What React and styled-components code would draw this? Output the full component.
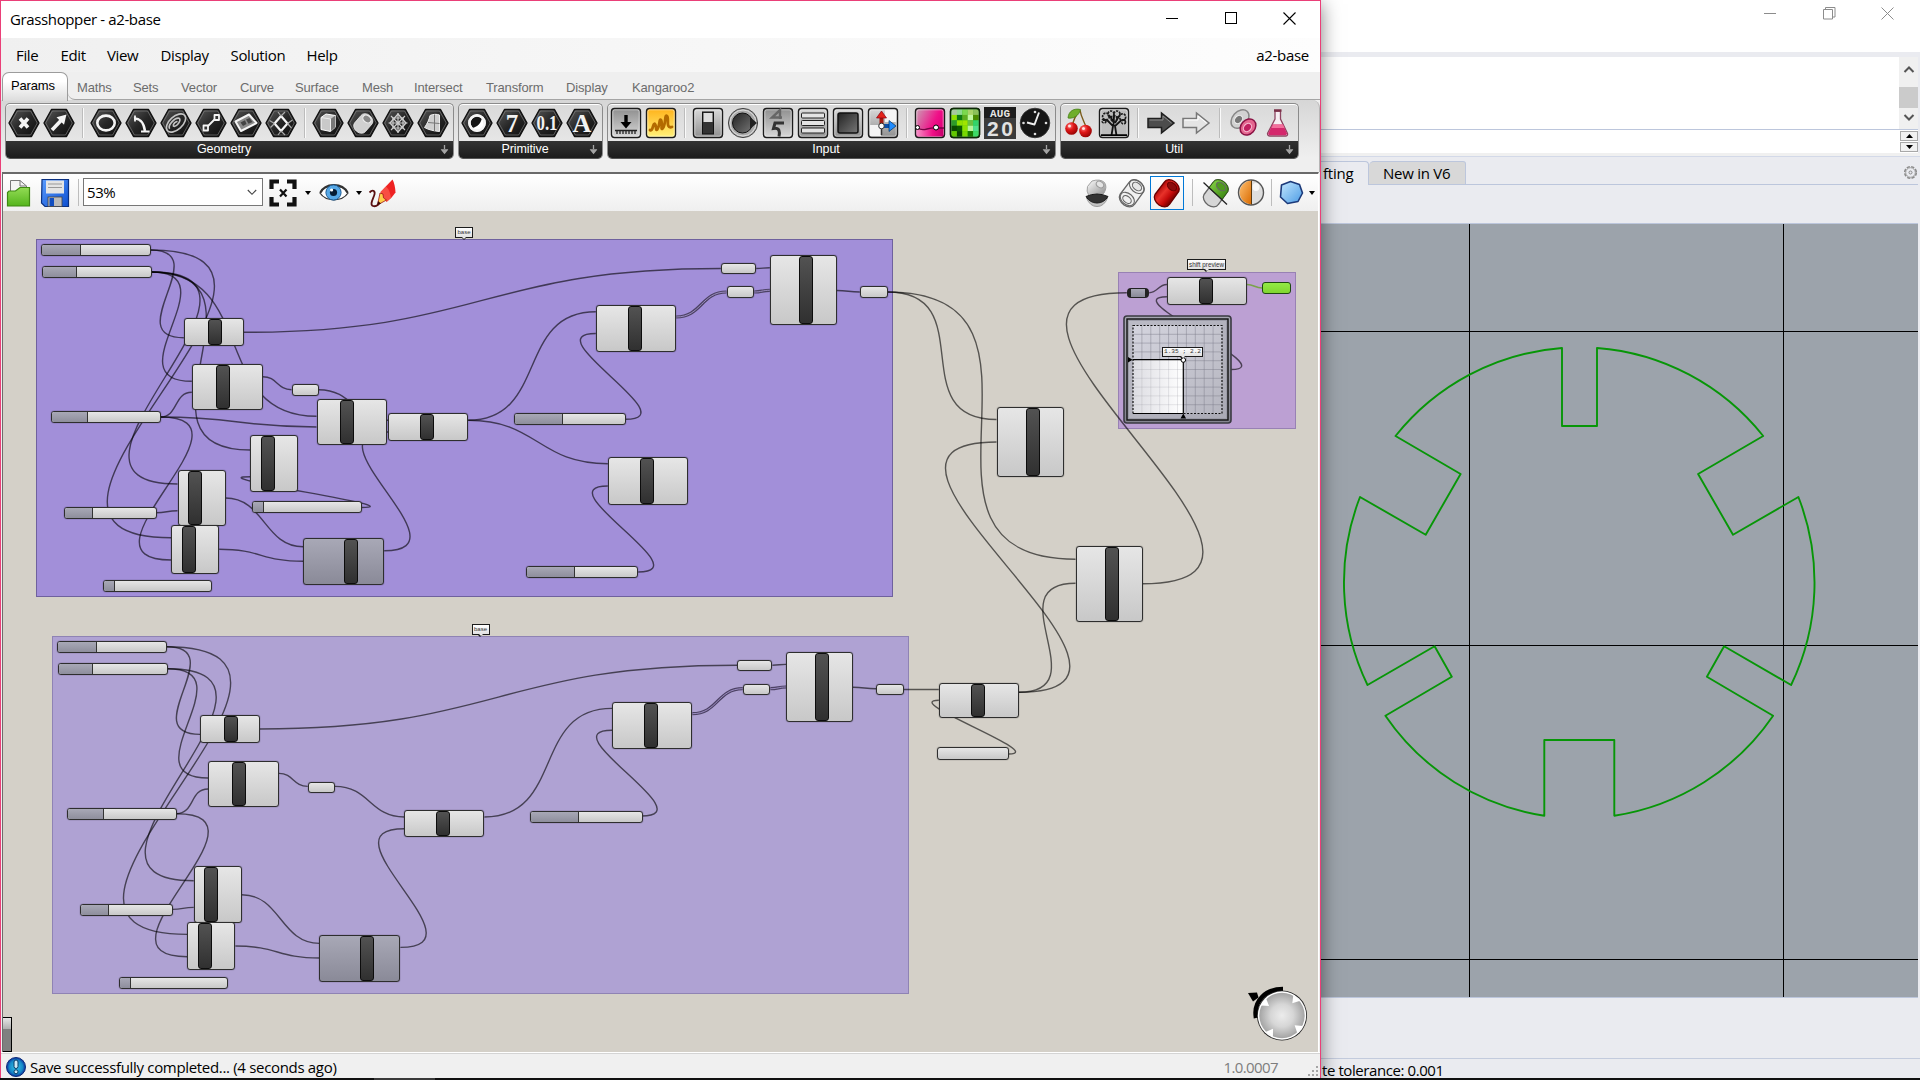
import React from "react";
import styled, { createGlobalStyle, css } from "styled-components";

const UI = `"Open Sans", "Noto Sans", sans-serif`;
const CLASSIC = `"Liberation Sans", Arial, sans-serif`;

const Global = createGlobalStyle`
  * { box-sizing: border-box; }
  html, body { margin: 0; padding: 0; }
  body { width: 1920px; height: 1080px; overflow: hidden; background: #eaebf0; }
  svg { display: block; }
`;

/* ---------- shell ---------- */
const Screen = styled.div`
  display: flex;
  flex-direction: column;
  width: 1920px;
  height: 1080px;
  font-family: ${UI};
  font-size: 15px;
  color: #000;
  white-space: nowrap;
`;
const Desktop = styled.div`
  display: flex;
  flex: 1;
  min-height: 0;
  overflow: hidden;
`;
const Taskbar = styled.div`
  height: 2px;
  background: linear-gradient(90deg, #101010 374px, #3a3a3a 374px, #3a3a3a 435px, #101010 435px);
  z-index: 3;
`;
const Grasshopper = styled.section`
  position: relative;
  z-index: 2;
  display: flex;
  flex-direction: column;
  width: 1321px;
  height: 1078px;
  border: 1px solid #ea3f78;
  border-bottom: 0;
  background: #efefef;
  box-shadow: 0 4px 18px rgba(0, 0, 0, 0.5);
`;
const TitleBar = styled.header`
  display: flex;
  justify-content: space-between;
  align-items: center;
  height: 37px;
  padding: 0 1px 2px 9px;
  background: #fff;
`;
const Label = styled.span`
  font-size: ${(p) => p.$size || 15}px;
  letter-spacing: ${(p) => p.$track || 0}px;
  color: ${(p) => p.$color || "inherit"};
  line-height: 20px;
`;
const WindowButtons = styled.div`
  display: flex;
  align-items: center;
  height: 100%;
`;
const WindowButton = styled.div`
  display: flex;
  align-items: center;
  justify-content: center;
  width: ${(p) => p.$w || 58.5}px;
  height: 100%;
`;
const MenuBar = styled.nav`
  display: flex;
  align-items: center;
  height: 34px;
  padding: 0 11px 0 15px;
  background: linear-gradient(90deg, #f0f0f0, #fdfdfd);
`;
const MenuItem = styled.span`
  width: ${(p) => p.$w}px;
  line-height: 20px;
  letter-spacing: ${(p) => p.$track || -0.35}px;
`;
const Spacer = styled.div`
  flex: 1;
`;

/* ---------- ribbon ---------- */
const TabStrip = styled.div`
  display: flex;
  height: 28px;
  background: #efefef;
  padding-left: 1px;
  font-family: ${CLASSIC};
  font-size: 13px;
`;
const ActiveTab = styled.div`
  width: 66px;
  height: 29px;
  padding: 4px 0 0 8px;
  line-height: 17px;
  letter-spacing: -0.15px;
  border: 1px solid #9c9c9c;
  border-bottom: 0;
  border-radius: 7px 7px 0 0;
  background: linear-gradient(#fff 30%, #dcdcdc);
  z-index: 1;
`;
const TabLabels = styled.div`
  display: flex;
  flex: 1;
  padding: 7px 0 0 9px;
  color: #6c6c6c;
  line-height: 17px;
  letter-spacing: -0.15px;
  border-bottom: 1px solid #a4a4a4;
  border-bottom-left-radius: 7px;
`;
const Tab = styled.span`
  width: ${(p) => p.$w}px;
`;
const Ribbon = styled.div`
  display: flex;
  gap: 4px;
  height: 72px;
  padding: 3px 0 0 4px;
  background: linear-gradient(#d6d6d6, #efefef 80%);
  border-right: 1px solid #b5b5b5;
  border-top-right-radius: 8px;
`;
const Group = styled.div`
  display: flex;
  flex-direction: column;
  width: ${(p) => p.$w}px;
  height: 56px;
  border: 1px solid #8b8b8b;
  border-bottom-color: #555;
  border-radius: 5px;
  background: linear-gradient(#d9d9d9, #ececec);
  box-shadow: inset 0 1px #fff;
  overflow: hidden;
`;
const GroupIcons = styled.div`
  display: flex;
  align-items: center;
  height: 37px;
  padding: 0 1px 0 0.5px;
`;
const Slot = styled.div`
  display: flex;
  justify-content: center;
  width: 35px;
`;
const Divider = styled.div`
  width: 12px;
  height: 30px;
  background: linear-gradient(90deg, transparent 5px, #bcbcbc 5px, #bcbcbc 6px, #fafafa 6px, #fafafa 7px, transparent 7px);
`;
const GroupTitle = styled.div`
  display: flex;
  justify-content: space-between;
  align-items: center;
  flex: 1;
  padding: 0 3px 1px 3px;
  color: #fff;
  font: 12.5px/14px ${CLASSIC};
  background: linear-gradient(#333, #1c1c1c);
`;
const TitleText = styled.span`
  flex: 1;
  text-align: center;
  letter-spacing: -0.1px;
`;

/* ---------- canvas toolbar ---------- */
const Document = styled.main`
  display: flex;
  flex-direction: column;
  flex: 1;
  min-height: 0;
  margin: 0 1px 0 1px;
  border-left: 1px solid #6c6c6c;
  border-top: 2px solid #6a6a6a;
  border-right: 1px solid #fff;
`;
const Toolbar = styled.div`
  display: flex;
  align-items: center;
  height: 37px;
  padding: 0 3px 0 3px;
  background: linear-gradient(#fff, #efefef);
`;
const Tool = styled.div`
  display: flex;
  align-items: center;
  justify-content: center;
  width: ${(p) => p.$w || 35}px;
  height: 34px;
  ${(p) => p.$on && css`border: 1px solid #0078d7; width: 34px; margin: 0 0 0 1px;`}
`;
const ToolRule = styled.div`
  width: 1px;
  height: 27px;
  margin: 0 ${(p) => p.$r}px 0 ${(p) => p.$l}px;
  background: #bdbdbd;
`;
const Zoom = styled.div`
  display: flex;
  align-items: center;
  justify-content: space-between;
  width: 180px;
  height: 28px;
  margin-bottom: 1px;
  padding: 0 5px 0 3px;
  background: #fff;
  border: 1px solid #777;
`;
const Caret = styled.div`
  width: 0;
  border: 3px solid transparent;
  border-top: 4px solid #000;
  border-bottom: 0;
  margin: 1px ${(p) => p.$r || 0}px 0 ${(p) => p.$l || 0}px;
`;

/* ---------- canvas ---------- */
const OX = 3.5;
const OY = 211;
const Canvas = styled.div`
  position: relative;
  flex: 1;
  overflow: hidden;
  background: #d4d0c8;
`;
const at = css`
  position: absolute;
  left: ${(p) => p.$x - OX}px;
  top: ${(p) => p.$y - OY}px;
  width: ${(p) => p.$w}px;
  height: ${(p) => p.$h}px;
`;
const Area = styled.div`
  ${at}
  background: ${(p) => p.$fill};
  border: 1px solid rgba(70, 60, 110, ${(p) => p.$edge});
`;
const Wires = styled.svg`
  position: absolute;
  left: 0;
  top: 0;
`;
const Capsule = styled.div`
  ${at}
  display: flex;
  border: 1px solid #2e2e2e;
  border-radius: 3px;
  background: ${(p) =>
    p.$dark ? "linear-gradient(#a8a8b6, #8a8a98)" : "linear-gradient(#e6e6e6, #c8c8c8)"};
  box-shadow: 0 0 1px rgba(0, 0, 0, 0.75);
`;
const Core = styled.div`
  width: 14px;
  height: 100%;
  margin-left: ${(p) => p.$at - 1}px;
  border: 1px solid #0c0c0c;
  border-radius: 3px;
  background: linear-gradient(#525252, #303030);
`;
const Fill = styled.div`
  width: ${(p) => p.$w}px;
  height: 100%;
  border-right: 1px solid #333;
  border-radius: 2px 0 0 2px;
  background: linear-gradient(#a8a8b6, #8e8e9c);
`;
const Tag = styled.div`
  ${at}
  border: 1px solid #1c1c1c;
  background: linear-gradient(#fff, #e2e2e2);
  color: #333;
  display: flex;
  justify-content: center;
  align-items: center;
  font: ${(p) => p.$font}px/${(p) => p.$h - 2}px ${(p) => (p.$mono ? `"Liberation Mono", monospace` : CLASSIC)};
  &::before,
  &::after {
    content: "";
    position: absolute;
    left: calc(50% - 3.5px);
    top: 100%;
    border: 3.5px solid transparent;
    border-top-color: #1c1c1c;
    border-bottom: 0;
  }
  &::after {
    left: calc(50% - 2px);
    border-width: 2px;
    border-bottom: 0;
    border-top-color: #ececec;
  }
`;
const Relay = styled.div`
  ${at}
  border: 1px solid #222;
  border-width: 1px 4px;
  border-radius: 4px;
  background: linear-gradient(#a8a8b6, #8a8a98);
`;
const Swatch = styled.div`
  ${at}
  border: 1.5px solid #1e4a10;
  border-radius: 3px;
  background: linear-gradient(#93ea45, #80d630);
`;
const FreeDrawing = styled.svg`
  ${at}
  overflow: visible;
`;
const EdgeHandle = styled.div`
  ${at}
  border: 1px solid #000;
  border-left: 0;
  background: linear-gradient(#e6e6e6, #b0b0b0 33%, #808080 34%);
`;
const StatusBar = styled.footer`
  display: flex;
  align-items: center;
  height: 26px;
  padding: 3px 1px 0 5px;
  border-top: 1px solid #fff;
  box-shadow: inset 0 1px #d4d4d4;
  background: #f0f0f0;
  gap: 4px;
`;
const Version = styled.div`
  display: flex;
  align-items: flex-end;
  gap: 29px;
`;

/* ---------- modelling window behind ---------- */
const Rhino = styled.section`
  display: flex;
  flex-direction: column;
  width: 599px;
  background: #eaebf0;
`;
const RhinoTitle = styled.div`
  display: flex;
  justify-content: flex-end;
  height: 52px;
  padding: 0 3px 25px 0;
  background: #fff;
`;
const CommandArea = styled.div`
  display: flex;
  height: 72px;
  margin: 5px 2px 0 0;
  background: #fff;
`;
const ScrollBar = styled.div`
  display: flex;
  flex-direction: column;
  align-items: center;
  width: 19px;
  height: 72px;
  margin-left: auto;
  background: #f0f0f0;
`;
const ScrollEnd = styled.div`
  display: flex;
  align-items: center;
  height: ${(p) => p.$h}px;
  padding-bottom: 3px;
`;
const Thumb = styled.div`
  width: 19px;
  height: 21px;
  background: #cbcbcb;
`;
const CommandLine = styled.div`
  display: flex;
  justify-content: flex-end;
  height: 24px;
  margin-right: 2px;
  border-top: 1px solid #bcc6dc;
  background: #fff;
`;
const Spin = styled.div`
  display: flex;
  flex-direction: column;
  gap: 1px;
  padding-top: 1px;
`;
const SpinButton = styled.div`
  display: flex;
  align-items: center;
  justify-content: center;
  width: 18px;
  height: 10px;
  border: 1px solid #a8a8a8;
  background: #f1f1f1;
`;
const PanelTabs = styled.div`
  display: flex;
  align-items: flex-end;
  height: 32px;
  padding-right: 2px;
  box-shadow: inset 0 3px #f0f0f0, inset 0 4px #d3d9e8;
`;
const PanelTab = styled.div`
  height: 24px;
  width: ${(p) => p.$w}px;
  padding: 1px 0 0 ${(p) => p.$pad}px;
  line-height: 21px;
  letter-spacing: -0.25px;
  border-top: 1px solid #bcc6dc;
  border-right: 1px solid #bcc6dc;
  border-radius: ${(p) => (p.$on ? "0 4px 0 0" : "5px 3px 0 0")};
  border-bottom: ${(p) => (p.$on ? "0" : "1px solid #bcc6dc")};
  background: ${(p) => (p.$on ? "#eaebf0" : "#d8d8d8")};
`;
const PanelRest = styled.div`
  display: flex;
  flex: 1;
  justify-content: flex-end;
  height: 24px;
  padding-top: 4px;
  border-bottom: 1px solid #bcc6dc;
`;
const ViewportGap = styled.div`
  height: 38px;
`;
const Viewport = styled.div`
  height: 775px;
  margin-right: 2px;
  border-top: 1px solid #bcc6dc;
  border-bottom: 1px solid #bcc6dc;
  background: #9ca3ab;
`;
const RhinoStatus = styled.div`
  height: 20px;
  margin-top: 60px;
  padding: 1px 0 0 1px;
  line-height: 21px;
  letter-spacing: -0.42px;
  border-top: 1px solid #c3cbdd;
`;

/* ---------- icons ---------- */
const Defs = () => (
  <svg width="0" height="0" style={{ position: "absolute" }}>
    <defs>
      <linearGradient id="hex" x1="0" y1="0" x2="1" y2="1">
        <stop offset="0" stopColor="#5a5a5a" /><stop offset=".5" stopColor="#262626" /><stop offset="1" stopColor="#0c0c0c" />
      </linearGradient>
      <linearGradient id="btn" x1="0" y1="0" x2="0" y2="1">
        <stop offset="0" stopColor="#dadada" /><stop offset="1" stopColor="#8f8f8f" />
      </linearGradient>
      <linearGradient id="btnUp" x1="0" y1="0" x2="0" y2="1">
        <stop offset="0" stopColor="#8e8e8e" /><stop offset="1" stopColor="#d8d8d8" />
      </linearGradient>
      <linearGradient id="dark" x1="0" y1="0" x2="1" y2="1">
        <stop offset="0" stopColor="#222" /><stop offset="1" stopColor="#777" />
      </linearGradient>
      <linearGradient id="yellow" x1="0" y1="0" x2="0" y2="1">
        <stop offset="0" stopColor="#ffb21a" /><stop offset="1" stopColor="#fff27a" />
      </linearGradient>
      <linearGradient id="pink" x1="0" y1="0" x2="1" y2=".5">
        <stop offset="0" stopColor="#c9a3b6" /><stop offset=".7" stopColor="#f01088" /><stop offset="1" stopColor="#e0007a" />
      </linearGradient>
      <linearGradient id="pinkLow" x1="0" y1="0" x2="1" y2="0">
        <stop offset="0" stopColor="#f58cc4" /><stop offset=".6" stopColor="#ef0f86" /><stop offset="1" stopColor="#c8006c" />
      </linearGradient>
      <linearGradient id="grey" x1="0" y1="0" x2="1" y2="1">
        <stop offset="0" stopColor="#fff" /><stop offset="1" stopColor="#8c8c8c" />
      </linearGradient>
      <linearGradient id="green" x1="0" y1="0" x2="1" y2="1">
        <stop offset="0" stopColor="#8edb4a" /><stop offset="1" stopColor="#2f7a0c" />
      </linearGradient>
      <linearGradient id="folder" x1="0" y1="0" x2="0" y2="1">
        <stop offset="0" stopColor="#93dc55" /><stop offset="1" stopColor="#54b41c" />
      </linearGradient>
      <linearGradient id="blue" x1="0" y1="0" x2="1" y2="1">
        <stop offset="0" stopColor="#5a9cff" /><stop offset="1" stopColor="#0d4fd0" />
      </linearGradient>
      <linearGradient id="ice" x1="0" y1="0" x2="1" y2="1">
        <stop offset="0" stopColor="#c4e8ff" /><stop offset="1" stopColor="#4a9ae4" />
      </linearGradient>
      <linearGradient id="red" gradientUnits="userSpaceOnUse" x1="8" y1="9" x2="22" y2="21">
        <stop offset="0" stopColor="#b00808" /><stop offset=".35" stopColor="#e8322a" /><stop offset=".7" stopColor="#c40a0a" /><stop offset="1" stopColor="#6e0000" />
      </linearGradient>
      <linearGradient id="orange" x1="0" y1="0" x2="1" y2="1">
        <stop offset="0" stopColor="#ffc070" /><stop offset="1" stopColor="#d96a00" />
      </linearGradient>
      <radialGradient id="berry" cx=".35" cy=".3" r=".8">
        <stop offset="0" stopColor="#ff8080" /><stop offset=".4" stopColor="#e01818" /><stop offset="1" stopColor="#8a0000" />
      </radialGradient>
      <radialGradient id="info" cx=".5" cy=".5" r=".5">
        <stop offset="0" stopColor="#35c5e8" /><stop offset=".7" stopColor="#1688c8" /><stop offset="1" stopColor="#0a2f9c" />
      </radialGradient>
      <radialGradient id="dial">
        <stop offset="0" stopColor="#ececec" /><stop offset=".5" stopColor="#d6d6d6" /><stop offset="1" stopColor="#a4a4a4" />
      </radialGradient>
      <linearGradient id="pad" x1="0" y1="0" x2="1" y2="1">
        <stop offset="0" stopColor="#d4d4de" /><stop offset="1" stopColor="#b6b6c0" />
      </linearGradient>
      <linearGradient id="sheet" x1="0" y1="0" x2="1" y2="0">
        <stop offset="0" stopColor="#dcdce2" /><stop offset="1" stopColor="#fff" />
      </linearGradient>
      <linearGradient id="frame" x1="0" y1="0" x2="0" y2="1">
        <stop offset="0" stopColor="#a6a6b2" /><stop offset="1" stopColor="#84848f" />
      </linearGradient>
    </defs>
  </svg>
);

const Hex = ({ children }) => (
  <svg width="32" height="30" viewBox="0 0 32 30">
    <polygon points="8.5,1.5 23.5,1.5 31,15 23.5,28.5 8.5,28.5 1,15" fill="url(#hex)" stroke="#111" strokeLinejoin="round" strokeWidth="1.4" />
    <polygon points="9.4,3 22.6,3 29.3,15 22.6,27 9.4,27 2.7,15" fill="none" stroke="#8a8a8a" strokeWidth=".8" opacity=".75" />
    <g fill="none" stroke="#f4f4f4" strokeWidth="2" strokeLinejoin="round">{children}</g>
  </svg>
);
const HexText = ({ size, fit, children }) => (
  <Hex>
    <text x="16" y={15 + size * 0.34} textAnchor="middle" textLength={fit} lengthAdjust="spacingAndGlyphs" fontFamily="Liberation Serif, serif" fontWeight="bold" fontSize={size} fill="#f2f2f2" stroke="none">{children}</text>
  </Hex>
);
const Tile = ({ fill = "url(#btn)", children }) => (
  <svg width="32" height="32" viewBox="0 0 32 32">
    <rect x="1.5" y="1.5" width="29" height="29" rx="3" fill={fill} stroke="#1c1c1c" strokeWidth="1.4" />
    <rect x="2.8" y="2.8" width="26.4" height="26.4" rx="2" fill="none" stroke="#fff" strokeWidth=".9" opacity=".55" />
    {children}
  </svg>
);
const Bare = ({ w = 32, h = 32, children }) => (
  <svg width={w} height={h} viewBox={`0 0 ${w} ${h}`}>{children}</svg>
);

const geometry = [
  <Hex><path d="M12 10.5l8 9M20 10.5l-8 9" strokeWidth="3.6" /></Hex>,
  <Hex><path d="M9 22L18.5 12" strokeWidth="3.6" /><path d="M13.5 9.2L23.5 6.5L21 16.8Z" fill="#f4f4f4" stroke="none" /></Hex>,
  null,
  <Hex><ellipse cx="16" cy="15" rx="8.7" ry="7.4" strokeWidth="2.6" /></Hex>,
  <Hex><path d="M9 10.5C13.500 10 18.500 13 20 23" strokeWidth="2.6" /><path d="M10 7.500v6M16 23.500h8.500" strokeWidth="1.8" /></Hex>,
  <Hex><g transform="rotate(-42 16 15)" strokeWidth="1.6" stroke="#c4c4c4"><ellipse cx="16" cy="15" rx="11.500" ry="6.500" /><path d="M7.500 15C8 11 19 10 21.500 13.500C22.500 17 13 18.500 12 15.500C13 13.500 17 13.500 18 15" /></g></Hex>,
  <Hex><path d="M12 19l8.5-8.5" strokeWidth="1.8" /><path d="M8.500 17.5h4.500v5h-4.500zM19.500 7h4.500v5h-4.500z" strokeWidth="1.8" fill="#333" /></Hex>,
  <Hex><path d="M5.500 13.500L19 6.5L26.5 15L11 23Z" fill="#8a8a8a" strokeWidth="2" /><path d="M10.500 14.500l4.500-2.200 1.500 3.700-3.500 2zM16 11.500l3.500-1.500 3 4-4 1.800z" fill="#444" stroke="none" /></Hex>,
  <Hex><path d="M16 8l6.500 7.500-6.500 7.500-6.500-7.500z" strokeWidth="2.200" /><path d="M16 8l-3-4M16 8l4-4M9.500 15.500l-5-3M9.500 15.500l-4 4M22.500 15.500l5-3.500M22.500 15.500l4 4.500M16 23l-3 4M16 23l4 4" strokeWidth="1.200" stroke="#aaa" /></Hex>,
  null,
  <Hex><path d="M9 9.5L14 6l9.5 1.5V19L18.5 23.5L9 21.5Z" fill="#c9c9c9" stroke="#fff" strokeWidth="1" /><path d="M18.5 11l5-3.5V19l-5 4.5z" fill="#777" stroke="none" /><path d="M9 9.5l9.5 1.5v12" stroke="#eee" strokeWidth="1" /></Hex>,
  <Hex><path d="M7.500 15L14 7.500A6.500 5 40 0 1 25 16L18.500 23.500A6.500 5 40 0 1 7.500 15Z" fill="#d0d0d0" stroke="#f0f0f0" strokeWidth=".8" /><ellipse cx="20" cy="11" rx="4.600" ry="3.400" transform="rotate(40 20 11)" fill="#888" stroke="#eee" strokeWidth="1.2" /></Hex>,
  <Hex><path d="M16 5v20M6.5 15h19M9 8l14 14M23 8L9 22" strokeWidth="1.2" stroke="#ccc" /><rect x="11" y="10" width="10" height="10" strokeWidth="1.2" stroke="#ccc" /><path d="M16 6l8 9-8 9-8-9z" strokeWidth="1.2" stroke="#ccc" /></Hex>,
  <Hex><path d="M13 7.5C16 6 20 6 22.5 7V23.5C17 23 12 22 7.5 19.5C10 16 12 12 13 7.5Z" fill="#cfcfcf" stroke="#eee" strokeWidth="1" /><path d="M17.500 6.5V23M11 14.5l11.5 1" stroke="#777" strokeWidth="1" /></Hex>,
];
const primitive = [
  <Hex><circle cx="16" cy="15" r="7.6" fill="#151515" strokeWidth="2.4" /><path d="M20.8 10.5A6.6 6.6 0 0 1 11.4 20C16 19 19.5 16 20.8 10.5Z" fill="#fff" stroke="none" /><circle cx="16" cy="15" r="7.6" strokeWidth="2.6" /></Hex>,
  <HexText size={25}>7</HexText>,
  <HexText size={21} fit={21}>0.1</HexText>,
  <HexText size={26}>A</HexText>,
];
const pixels = ["#a8c8a0", "#8fd890", "#7bd84e", "#a9d468", "#8cc05a", "#8ee000", "#0f7a12", "#5fae20", "#c0f7a0", "#4a8c00", "#2e9a2a", "#93e000", "#a0e400", "#6cc040", "#33d36a", "#0a4a00", "#0c5c00", "#8de000", "#b9f29a", "#4fe08c", "#63c800", "#0a4500", "#79d800", "#1a7a00", "#3ddb66"];
const input = [
  <Tile fill="url(#btnUp)"><path d="M16 8v9" stroke="#000" strokeWidth="3.4" /><path d="M10.5 15h11L16 21.5z" /><path d="M5 23.5h22M7 23v4M10 23v4M13 23v4M16 23v4M19 23v4M22 23v4M25 23v4" stroke="#222" strokeWidth="1.3" /></Tile>,
  <Tile fill="url(#yellow)"><path d="M5 23C8 25 8 15 10 17S10 25 12.500 22S14 11 16 13S15 25 18 21S19.500 7 22 9S20 22 27 20" fill="none" stroke="#b36a00" strokeWidth="2.8" strokeLinecap="round" strokeLinejoin="round" /></Tile>,
  null,
  <Tile><rect x="10.5" y="5" width="11" height="22" fill="#333" stroke="#111" /><rect x="11.5" y="6" width="9" height="9" fill="#ddd" /></Tile>,
  <Bare><circle cx="16" cy="16" r="14.6" fill="#a9a9a9" stroke="#444" /><circle cx="16" cy="16" r="13" fill="none" stroke="#ddd" /><circle cx="15.5" cy="16" r="10" fill="url(#dark)" stroke="#111" /><path d="M23 10l7 6-7 6z" fill="#222" /></Bare>,
  <Tile fill="url(#btnUp)"><path d="M18 12V3L10 10.500h10" fill="none" stroke="#666" strokeWidth="2.400" /><path d="M22 16h-9l-1.500 5.500c6-1 6.500 3 5.500 8" fill="none" stroke="#333" strokeWidth="3" /></Tile>,
  <Tile>{[6, 13.5, 21].map((y) => <rect key={y} x="4.500" y={y} width="23" height="5" rx="1" fill="#e4e4e4" stroke="#222" />)}</Tile>,
  <Tile><rect x="6" y="6" width="20" height="20" rx="2" fill="url(#dark)" stroke="#111" strokeWidth="1.500" /></Tile>,
  <Tile><path d="M3 18h11v11H3zM18 3h11v12H18z" fill="#f4f4f4" /><path d="M14.500 28V18" stroke="#333" strokeWidth="1.500" /><path d="M14.500 17V10" stroke="#a31a10" strokeWidth="4" /><path d="M9.500 11l5-7 5 7z" fill="#e3231a" stroke="#801" strokeWidth=".7" /><path d="M16 19h7" stroke="#0b4fa8" strokeWidth="4" /><path d="M22 13.500l7 5.500-7 5.500z" fill="#1f8cff" stroke="#036" strokeWidth=".7" /><circle cx="14.500" cy="19" r="2.800" fill="#fff" stroke="#333" /></Tile>,
  null,
  <Tile fill="url(#pink)"><path d="M3 21h26v8H3z" fill="url(#pinkLow)" /><path d="M4 21q3 2.500 9 1t9-1h8" fill="none" stroke="#7a0044" strokeWidth="1.500" /><circle cx="3.500" cy="20.500" r="2" fill="#fff" stroke="#000" /><circle cx="22" cy="20.500" r="2.500" fill="#fff" stroke="#000" /></Tile>,
  <Tile fill="#1fae1f">{pixels.map((c, i) => <rect key={i} x={2.500 + (i % 5) * 5.400} y={2.500 + Math.floor(i / 5) * 5.400} width="5.500" height="5.500" fill={c} />)}<rect x="1.500" y="1.500" width="29" height="29" rx="3" fill="none" stroke="#0c2a05" strokeWidth="1.400" /></Tile>,
  <Bare><rect width="32" height="32" fill="#1d1d1d" /><rect y="11" width="32" height="21" fill="#3b3b3b" /><text x="16" y="9.500" textAnchor="middle" fontSize="11" textLength="20" fontFamily="Liberation Mono, monospace" fontWeight="bold" fill="#e6e6e6">AUG</text><text x="16" y="28.800" textAnchor="middle" fontSize="21" textLength="26" fontWeight="bold" fontFamily="Liberation Sans, sans-serif" fill="#e2e2e2">20</text></Bare>,
  <Bare><circle cx="16" cy="16" r="14.800" fill="#161616" stroke="#333" strokeWidth=".8" /><path d="M20 5.500L15.500 17.500L8 15.500" fill="none" stroke="#eee" strokeWidth="1.900" strokeLinejoin="round" /><g fill="#ddd"><circle cx="16" cy="5" r="1.300" /><circle cx="27" cy="16" r="1.300" /><circle cx="16" cy="27" r="1.300" /><circle cx="4.500" cy="16" r="1.300" /></g></Bare>,
];
const util = [
  <Bare><path d="M17 3C12 9 10 14 9.500 19M17 3C18 10 21 14 23 20" fill="none" stroke="#7a5a1a" strokeWidth="1.400" /><path d="M5 11C5.500 4 11 1 17.500 2.500C16 9 10 12 5 11Z" fill="#6fae2c" stroke="#47801a" strokeWidth=".8" /><circle cx="8.500" cy="21.500" r="6.300" fill="url(#berry)" /><circle cx="22.500" cy="24" r="6.300" fill="url(#berry)" /><circle cx="6.500" cy="19" r="1.500" fill="#fff" opacity=".8" /><circle cx="20.500" cy="21.500" r="1.500" fill="#fff" opacity=".8" /></Bare>,
  <Tile fill="#bcbcbc"><path d="M13.500 28.500L15 19L9 13M15.500 19L16 9M18.500 28.500L17 19L23.500 13M16 16l-4-7M17 16l4-7M9 13l-4 0M23.500 13l4 0" stroke="#111" strokeWidth="1.800" fill="none" /><g fill="none" stroke="#1b1b1b" strokeWidth="1.700" strokeDasharray="2.200 1"><circle cx="8" cy="9.500" r="3.400" /><circle cx="13" cy="7" r="3" /><circle cx="19" cy="7" r="3" /><circle cx="24.500" cy="10" r="3.200" /><circle cx="6" cy="14" r="2" /><circle cx="25.500" cy="15" r="2" /><circle cx="16" cy="11.500" r="3" /></g><path d="M3 29h26v-1.800H3z" /></Tile>,
  null,
  <Bare><path d="M3 11.500h13.500V6L29 16L16.500 26v-5.500H3z" fill="#4c4c4c" stroke="#1f1f1f" strokeWidth="1.500" /><path d="M4.500 13h13.500V9l8.500 7" fill="none" stroke="#8a8a8a" /></Bare>,
  <Bare><path d="M3 11.500h13.500V6L29 16L16.500 26v-5.500H3z" fill="#e4e4e4" stroke="#777" strokeWidth="1.500" /><path d="M4.500 13h13.500V9l8.500 7" fill="none" stroke="#fff" /></Bare>,
  null,
  <Bare><ellipse cx="13" cy="12" rx="7.500" ry="10.500" transform="rotate(42 13 12)" fill="#d2d2d2" stroke="#888" strokeWidth="1.500" /><ellipse cx="11.500" cy="12.500" rx="3.500" ry="4.500" transform="rotate(42 11.500 12.500)" fill="#777" stroke="#eee" /><ellipse cx="21" cy="20" rx="7" ry="8.800" transform="rotate(42 21 20)" fill="#e4668f" stroke="#8a1244" strokeWidth="1.500" /><ellipse cx="20.500" cy="20.500" rx="3.600" ry="4.600" transform="rotate(42 20.500 20.500)" fill="#c02060" stroke="#f4b4cc" strokeWidth="1.200" /></Bare>,
  <Bare><path d="M13 4V12L5.500 26.500Q5.500 29 8 29H23.500Q26 29 25.500 26.500L18.500 12V4Z" fill="#f6eef2" stroke="#8c4560" strokeWidth="1.300" /><path d="M10.500 17.500H21L25 26.500Q25 28.300 23 28.300H8Q6 28.300 6.200 26.500Z" fill="#d4286c" /><path d="M11 17.500h10l1.500 3.500h-13z" fill="#f2709c" /><path d="M12 3.500h7.500" stroke="#7a3048" strokeWidth="2.400" /></Bare>,
];

const Plus = () => (
  <Bare w={11} h={11}><path d="M5.500 1v7M3 6.200l2.500 3 2.500-3z" stroke="#a5a5a5" strokeWidth="1.300" fill="#a5a5a5" /><path d="M2 5.500h7" stroke="#888" /></Bare>
);
const RibbonGroup = ({ title, icons, width }) => (
  <Group $w={width}>
    <GroupIcons>{icons.map((icon, i) => (icon ? <Slot key={i}>{icon}</Slot> : <Divider key={i} />))}</GroupIcons>
    <GroupTitle><TitleText>{title}</TitleText><Plus /></GroupTitle>
  </Group>
);

/* Short tube leaning to the right, shared by the preview modes. */
const Tube = ({ fill, stroke, hole, children }) => (
  <Bare w={30} h={30}>
    <path d="M3 16.500L12.500 3.800A8.700 6.200 40 0 1 26.800 13.500L17.300 26.500A8.700 6.200 40 0 1 3 16.500Z" fill={fill} stroke={stroke} strokeWidth="1.300" />
    {children}
    <ellipse cx="20" cy="8.500" rx="5.200" ry="3.500" transform="rotate(40 20 8.500)" fill={hole} stroke={stroke} strokeWidth="1.100" />
  </Bare>
);

/* ---------- diagram data ---------- */
const shift = (list, dx, dy) => list.map(([x, y, ...rest]) => [x + dx, y + dy, ...rest]);
const shiftWires = (list, dx, dy) => list.map(([a, b, c, d, ...r]) => [a + dx, b + dy, c + dx, d + dy, ...r]);
const DX = 16.2;
const DY = 396.7;

// x, y, width, filled part
const slidersA = [
  [41.5, 244.3, 110, 38.5],
  [42.500, 266, 110, 33.5],
  [51.500, 411.3, 110, 35.5],
  [64, 507, 93, 28],
  [103, 580.3, 109.700, 11.5],
];
const sliders = [
  ...slidersA,
  [252.7, 501.3, 109.500, 11.3],
  [514, 413.2, 112.500, 48],
  [526.3, 566, 112.500, 48],
  ...shift(slidersA, DX, DY + 0.4),
  [530.6, 811.2, 112.500, 48],
];
// x, y, width, height, offset of the core, shaded
const compA = [
  [184.6, 318.3, 59.700, 27.500, 24],
  [192.6, 364.3, 71, 45.500, 23.700],
  [178.2, 469.700, 48, 56.700, 10.200],
  [171.9, 525.3, 48, 48.300, 10.300],
  [303.9, 538.3, 81, 46.700, 41, true],
  [388.700, 413, 80, 27.600, 32],
  [596.5, 305, 80.300, 47, 32],
  [770.5, 255.3, 67, 70, 29.400],
];
const components = [
  [317, 399, 70.700, 45.700, 23.500],
  [250.9, 435.3, 48, 56.700, 10.300],
  ...compA,
  [608.5, 457.3, 79.700, 47.300, 32],
  ...shift(compA, DX - 0.3, DY),
  [997.3, 407, 67, 70, 29],
  [1076.3, 546, 67, 75.700, 29],
  [939.6, 682.7, 80, 35, 31.700],
  [1167.4, 277, 80, 27.700, 32],
];
const paramsA = [
  [292.3, 384.3, 27.300, 11.300],
  [721.5, 262.6, 35.300, 11.500],
  [727.2, 286.3, 27.700, 11.600],
  [860.5, 286.3, 27.700, 11.600],
];
const params = [...paramsA, ...shift(paramsA, DX - 0.2, DY + 0.6), [937.4, 747.3, 72.3, 12.3]];

const wiresA = [
  [151, 250, 184.3, 337.7],
  [151, 250, 171.7, 537.7],
  [152, 272, 192.3, 381.3],
  [152, 272, 178, 484],
  [160.7, 417, 192.3, 392.3],
  [160.7, 417, 171.7, 560],
  [156.5, 512.7, 178, 510.7],
  [263.3, 376.7, 292, 389.7],
  [319.3, 389.7, 388.7, 420.3],
  [384.7, 550.7, 388.7, 432],
  [226, 498, 303.7, 546.7],
  [219.700, 549.3, 303.7, 561.3],
  [244, 332.3, 721.3, 268.5],
  [468.7, 420.3, 596.3, 311.7],
  [626, 419.3, 596.3, 333.5],
  [676.7, 317, 727, 292, true],
  [754.7, 292, 770.3, 290.3, true],
  [756.7, 268.5, 770.3, 267.7],
  [837.3, 290.5, 860.3, 292],
];
const wires = [
  ...wiresA,
  ...shiftWires(wiresA, DX, DY),
  [152, 272, 250.7, 450],
  [152, 272, 317, 416.3],
  [160.7, 417, 317, 427],
  [361.7, 507.5, 250.7, 476.7],
  [468.7, 420.3, 608.3, 463.7],
  [638.7, 572, 608.3, 486],
  [888, 292, 997, 419.5],
  [888, 292, 1076, 559.2],
  [904, 689.5, 939.3, 689.5],
  [1009.3, 754, 939.3, 700.3],
  [1019.3, 692.3, 1076, 583.3],
  [1019.3, 692.3, 997, 442],
  [1143, 583.7, 1127.3, 292.7],
  [1149.7, 292.7, 1167.4, 284.5],
  [1231.6, 369.5, 1167.4, 296.7],
];
const curve = ([x1, y1, x2, y2]) => {
  const d = Math.max(Math.abs(x2 - x1) * 0.5, Math.abs(y2 - y1) * 0.74);
  return `M${x1} ${y1}C${x1 + d} ${y1} ${x2 - d} ${y2} ${x2} ${y2}`;
};

const TwoAxisSlider = () => {
  const lines = [1, 2, 3, 4, 5, 6, 7, 8, 9];
  return (
    <FreeDrawing $x={1123} $y={315} $w={109} $h={109} viewBox="0 0 109 109">
      <rect x="1" y="1" width="107" height="107" rx="3" fill="url(#frame)" stroke="#3a3a42" strokeWidth="1.600" />
      <rect x="4" y="4" width="101" height="101" fill="#9c9ca8" stroke="#111" strokeWidth="1.400" />
      <rect x="6" y="6" width="97" height="97" fill="url(#pad)" opacity=".55" />
      <rect x="10" y="10.500" width="89" height="88" fill="url(#pad)" />
      <rect x="10" y="44.700" width="50.300" height="53.800" fill="url(#sheet)" />
      <g stroke="#7d7d8a" strokeOpacity=".45" strokeWidth="1">
        {lines.map((i) => <path key={i} d={`M${10 + i * 8.900} 10.500v34M10 ${10.500 + i * 8.800}m${i > 3 ? 50.3 : 0} 0H99`} />)}
        {[6, 7, 8, 9].map((i) => <path key={i} d={`M${10 + i * 8.900} 44.500v54`} />)}
      </g>
      <g stroke="#7d7d8a" strokeOpacity=".18" strokeWidth="1">
        {[1, 2, 3, 4, 5].map((i) => <path key={i} d={`M${10 + i * 8.900} 44.700v54M10 ${45.700 + i * 8.800}h50`} />)}
      </g>
      <rect x="10" y="10.500" width="89" height="88" fill="none" stroke="#111" strokeWidth="1.200" strokeDasharray="2 1.500" />
      <path d="M10 44.700H60.300V98.500M10 98.500h50" fill="none" stroke="#000" strokeWidth="1.200" />
      <path d="M5 42l4.500 2.700L5 47.500zM57.500 103.500l2.800-5 2.800 5z" />
      <circle cx="60.300" cy="45" r="2.300" fill="#fff" stroke="#000" />
    </FreeDrawing>
  );
};
const Compass = () => (
  <FreeDrawing $x={1248} $y={984} $w={60} $h={60} viewBox="0 0 60 60">
    <path d="M8 34C5 17 18 5 35 5" fill="none" stroke="#000" strokeWidth="4.500" />
    <path d="M0 9l9-.5 1.500 5L5 17.500z" />
    <circle cx="34" cy="31.500" r="25" fill="#222" />
    <circle cx="34" cy="31.500" r="24.200" fill="#fff" />
    <circle cx="34" cy="31.500" r="22.700" fill="url(#dial)" />
    {[40, 128, 214, 306].map((a) => <path key={a} transform={`rotate(${a} 34 31.500)`} d="M29.500 8.500h9l-4.500 7z" fill="#fff" />)}
  </FreeDrawing>
);

const tabs = [["Maths", 56], ["Sets", 48], ["Vector", 59], ["Curve", 55], ["Surface", 67], ["Mesh", 52], ["Intersect", 72], ["Transform", 80], ["Display", 66], ["Kangaroo2", 70]];
const menus = [["File", 44.5], ["Edit", 46.5], ["View", 53.5], ["Display", 70], ["Solution", 76], ["Help", 40]];
const OUTLINE =
  "M1562 348V426H1597V348A235.500 235.500 0 0 1 1763.200 436L1698.100 474L1733 534.700L1798.400 497A235.500 235.500 0 0 1 1791.100 685L1724.100 646.300L1706.900 676.700L1773.100 715.700A235.500 235.500 0 0 1 1614.300 815.700V740H1544.300V815.700A235.500 235.500 0 0 1 1385.400 715.700L1451.800 676.700L1434.600 646.300L1367.500 685A235.500 235.500 0 0 1 1360 497L1425.700 534.700L1460.600 474L1395.500 436A235.500 235.500 0 0 1 1562 348Z";

export default function App() {
  return (
    <Screen>
      <Global />
      <Defs />
      <Desktop>
        <Grasshopper>
          <TitleBar>
            <Label $track={-0.37}>Grasshopper - a2-base</Label>
            <WindowButtons>
              <WindowButton><Bare w={13} h={13}><path d="M0 6.500h12" stroke="#000" /></Bare></WindowButton>
              <WindowButton><Bare w={13} h={13}><rect x=".5" y=".5" width="11" height="11" fill="none" stroke="#000" /></Bare></WindowButton>
              <WindowButton><Bare w={13} h={13}><path d="M.5 .5l12 12M12.500 .5l-12 12" stroke="#000" strokeWidth="1.100" /></Bare></WindowButton>
            </WindowButtons>
          </TitleBar>
          <MenuBar>
            {menus.map(([t, w]) => <MenuItem key={t} $w={w}>{t}</MenuItem>)}
            <Spacer />
            <Label $track={-0.3}>a2-base</Label>
          </MenuBar>
          <TabStrip>
            <ActiveTab>Params</ActiveTab>
            <TabLabels>{tabs.map(([t, w]) => <Tab key={t} $w={w}>{t}</Tab>)}</TabLabels>
          </TabStrip>
          <Ribbon>
            <RibbonGroup title="Geometry" icons={geometry} width={449} />
            <RibbonGroup title="Primitive" icons={primitive} width={145} />
            <RibbonGroup title="Input" icons={input} width={449} />
            <RibbonGroup title="Util" icons={util} width={239} />
          </Ribbon>
          <Document>
            <Toolbar>
              <Tool $w={26}>
                <Bare w={26} h={30}><path d="M4.500 2.500H14L20.500 8V18H4.500Z" fill="#f4f4f4" stroke="#777" /><path d="M14 2.500V8h6.500" fill="none" stroke="#777" /><path d="M1.500 28V14.500L3 13H9.500L14 9.500H23.500V28Z" fill="url(#folder)" stroke="#3f8a12" strokeWidth="1.200" /></Bare>
              </Tool>
              <Tool $w={46}>
                <Bare w={30} h={30}><path d="M2 1.500H28.500V28.500H5L1.500 25Z" fill="url(#blue)" stroke="#0a3080" strokeWidth="1.200" /><rect x="6" y="2.500" width="18" height="13" fill="#e4e4e4" /><path d="M8 6h14M8 9.500h14" stroke="#999" /><rect x="8" y="19" width="14" height="9.500" fill="#bbb" stroke="#444" strokeWidth=".8" /><rect x="9.500" y="20" width="4.500" height="8" fill="#124ec0" /></Bare>
              </Tool>
              <ToolRule $l={0} $r={4} />
              <Zoom>
                <Label $track={-0.4}>53%</Label>
                <Bare w={10} h={7}><path d="M.8 1l4.200 4.300L9.200 1" fill="none" stroke="#444" strokeWidth="1.100" /></Bare>
              </Zoom>
              <Tool $w={40}>
                <Bare w={30} h={30}><path d="M3.500 11V3.500H11M19 3.500H26.500V11M26.500 19V26.500H19M11 26.500H3.500V19" fill="none" stroke="#111" strokeWidth="4.200" /><path d="M12 11.500l6.500 7M18.500 11.500l-6.500 7" stroke="#111" strokeWidth="2.200" /></Bare>
              </Tool>
              <Caret $l={2} />
              <Tool $w={45}>
                <Bare w={30} h={22}><path d="M1 11C6 2 23 1 29 11C23 20 7 20 1 11Z" fill="#fff" stroke="#333" strokeWidth="1.300" /><path d="M1.500 10.500C6 1 23 0 28.500 10.500" fill="none" stroke="#333" strokeWidth="2.200" /><circle cx="14.500" cy="10.500" r="7.600" fill="#56a8e6" stroke="#1d5d96" /><circle cx="14.500" cy="10.500" r="3.600" fill="#061c33" /><circle cx="12.600" cy="8" r="1.600" fill="#fff" /></Bare>
              </Tool>
              <Caret />
              <Tool $w={42}>
                <Bare w={30} h={30}><path d="M1.500 14.500C5 11 8 13 6 18S2 27 5 28S8.500 28 11 26" fill="none" stroke="#5a1010" strokeWidth="1.800" /><path d="M12.500 14L24.500 1.500Q27 6 27.500 14.500Q24 20 18.500 24Z" fill="#ee2222" /><path d="M12.500 14L18 8.500Q22 12 23 20L18.500 24Z" fill="#ff6a5a" opacity=".6" /><path d="M9.500 27L12 15L15 16L15.500 20L18.500 22Z" fill="#ffcf4a" stroke="#a01010" strokeWidth=".8" /><path d="M9 27.500l1-4.500 3 2.500z" fill="#3a0808" /></Bare>
              </Tool>
              <Spacer />
              <Tool>
                <Bare w={30} h={30}><path d="M5.500 8.500L10 3Q18 .5 22.500 4.500Q25.500 9 22 15L19 18H7Q4 13 5.500 8.500Z" fill="url(#grey)" stroke="#a2a2a2" /><ellipse cx="18" cy="6.500" rx="4" ry="3" transform="rotate(35 18 6.500)" fill="#e4e4e4" stroke="#999" /><path d="M4.500 20Q8 28.500 15 28.500T25.500 20Z" fill="#c4c4c4" stroke="#999" /><path d="M4 18.500Q15 13.500 26 18.500Q22 25 15 25T4 18.500Z" fill="#333" stroke="#1a1a1a" /></Bare>
              </Tool>
              <Tool><Tube fill="#f0f0f0" stroke="#666" hole="#e6e6e6"><g fill="none" stroke="#666" strokeWidth="1.100"><ellipse cx="19.700" cy="8.700" rx="8.300" ry="5.600" transform="rotate(40 19.700 8.700)" /><ellipse cx="10.300" cy="21" rx="8" ry="5.600" transform="rotate(40 10.300 21)" /><ellipse cx="10" cy="21.500" rx="4.800" ry="3.200" transform="rotate(40 10 21.500)" /></g></Tube></Tool>
              <Tool $on><Tube fill="url(#red)" stroke="#6a0000" hole="#8c0c0c" /></Tool>
              <ToolRule $l={8} $r={5} />
              <Tool>
                <Tube fill="#d6d6d6" stroke="#666" hole="#4f9a1e">
                  <path d="M8 9.800L12.500 3.800A8.700 6.200 40 0 1 26.800 13.500L21 21.500Z" fill="url(#green)" stroke="#2f5a14" />
                  <path d="M2.500 4.500L26 26.500" stroke="#222" strokeWidth="1.300" />
                </Tube>
              </Tool>
              <Tool>
                <Bare w={30} h={30}><circle cx="15" cy="14.500" r="12.500" fill="#dedede" stroke="#555" strokeWidth="1.400" /><path d="M15.500 2.700A11.800 11.800 0 0 0 15.500 26.300Z" fill="url(#orange)" /><path d="M15.500 2.500v24" stroke="#5a3a10" /><ellipse cx="20" cy="9" rx="3.500" ry="4" fill="#fff" opacity=".8" /></Bare>
              </Tool>
              <ToolRule $l={3} $r={4} />
              <Tool $w={30}>
                <Bare w={28} h={28}><path d="M4.500 6L13.500 2.500L22.500 5.500L25.500 14L21 22.500L10.500 24.500L3.500 18Z" fill="url(#ice)" stroke="#1c3a7a" strokeWidth="1.600" strokeLinejoin="round" /></Bare>
              </Tool>
              <Caret $l={3} />
            </Toolbar>
            <Canvas>
              <Area $x={36.500} $y={239} $w={857} $h={358} $fill="#a28fd9" $edge={0.55} />
              <Area $x={52.5} $y={636.3} $w={857} $h={358} $fill="#afa2d3" $edge={0.3} />
              <Area $x={1118.500} $y={272} $w={178} $h={156.5} $fill="#bca0d3" $edge={0.3} />
              <Wires width="1315" height="841" viewBox={`${OX} ${OY} 1315 841`} fill="none">
                {wires.map((w, i) =>
                  w[4] ? (
                    <g key={i}><path d={curve(w)} stroke="#4c4264" strokeWidth="3.2" /><path d={curve(w)} stroke="#a494cc" strokeWidth=".9" /></g>
                  ) : (
                    <path key={i} d={curve(w)} stroke="#000" strokeOpacity=".6" strokeWidth="1.4" />
                  )
                )}
                <path d={curve([1247.4, 284.5, 1262.7, 288])} stroke="#7ba24c" strokeWidth="1.6" />
              </Wires>
              {components.map(([x, y, w, h, c, dark], i) => (
                <Capsule key={i} $x={x} $y={y} $w={w} $h={h} $dark={dark}><Core $at={c} /></Capsule>
              ))}
              {sliders.map(([x, y, w, f], i) => (
                <Capsule key={i} $x={x} $y={y} $w={w} $h={11.6}><Fill $w={f} /></Capsule>
              ))}
              {params.map(([x, y, w, h], i) => <Capsule key={i} $x={x} $y={y} $w={w} $h={h} />)}
              <Relay $x={1127.3} $y={288} $w={22.5} $h={10.3} />
              <Swatch $x={1262.3} $y={282} $w={29} $h={12} />
              <TwoAxisSlider />
              <Tag $x={1162.5} $y={347.3} $w={41} $h={9.5} $font={6.2} $mono>1.35 ; 2.2</Tag>
              <Tag $x={1187.5} $y={259} $w={39} $h={11} $font={6.3}>shift preview</Tag>
              <Tag $x={455.5} $y={227} $w={18} $h={10.5} $font={6}>base</Tag>
              <Tag $x={472} $y={624} $w={18} $h={10.5} $font={6}>base</Tag>
              <EdgeHandle $x={3.500} $y={1017} $w={9} $h={35} />
              <Compass />
            </Canvas>
          </Document>
          <StatusBar>
            <Bare w={20} h={20}><circle cx="10" cy="10" r="9.500" fill="url(#info)" stroke="#0b2a78" /><rect x="8" y="3" width="4" height="8.500" rx="2" fill="#cdeaf6" stroke="#083a66" /><circle cx="10" cy="14.800" r="2" fill="#cdeaf6" stroke="#083a66" /></Bare>
            <Label $track={-0.32}>Save successfully completed... (4 seconds ago)</Label>
            <Spacer />
            <Version>
              <Label $color="#7d7d7d" $track={-0.6}>1.0.0007</Label>
              <Bare w={12} h={12}><g fill="#a5a5a5"><path d="M9 1h2v2H9zM9 5h2v2H9zM9 9h2v2H9zM5 5h2v2H5zM5 9h2v2H5zM1 9h2v2H1z" /></g></Bare>
            </Version>
          </StatusBar>
        </Grasshopper>

        <Rhino>
          <RhinoTitle>
            <WindowButton $w={58.5}><Bare w={13} h={13}><path d="M0 6.500h12" stroke="#8c8c8c" /></Bare></WindowButton>
            <WindowButton $w={58.5}><Bare w={13} h={13}><path d="M.5 2.500h9v9.500h-9zM2.500 2.500V.5h9.500V10h-2.500" fill="none" stroke="#8c8c8c" /></Bare></WindowButton>
            <WindowButton $w={58.5}><Bare w={13} h={13}><path d="M.5 .5l12 12M12.500 .5l-12 12" stroke="#8c8c8c" /></Bare></WindowButton>
          </RhinoTitle>
          <CommandArea>
            <ScrollBar>
              <ScrollEnd $h={30}><Bare w={12} h={16}><path d="M1.500 9l4.500-4.500L10.500 9" fill="none" stroke="#555" strokeWidth="2" /></Bare></ScrollEnd>
              <Thumb />
              <ScrollEnd $h={21}><Bare w={12} h={8}><path d="M1.500 2l4.500 4.500 4.500-4.500" fill="none" stroke="#555" strokeWidth="2" /></Bare></ScrollEnd>
            </ScrollBar>
          </CommandArea>
          <CommandLine>
            <Spin>
              <SpinButton><Bare w={7} h={4}><path d="M0 4l3.500-4L7 4z" /></Bare></SpinButton>
              <SpinButton><Bare w={7} h={4}><path d="M0 0l3.500 4L7 0z" /></Bare></SpinButton>
            </Spin>
          </CommandLine>
          <PanelTabs>
            <PanelTab $on $w={48} $pad={2}>fting</PanelTab>
            <PanelTab $w={97} $pad={14}>New in V6</PanelTab>
            <PanelRest>
              <Bare w={15} h={15}><circle cx="7.500" cy="7.500" r="5.800" fill="none" stroke="#8a8a8a" strokeWidth="1.600" strokeDasharray="3.200 1.350" /><circle cx="7.500" cy="7.500" r="4.800" fill="none" stroke="#999" strokeWidth=".9" /><circle cx="7.500" cy="7.500" r="1.500" fill="none" stroke="#888" /></Bare>
            </PanelRest>
          </PanelTabs>
          <ViewportGap />
          <Viewport>
            <svg width="597" height="773" viewBox="1321 224 597 773" fill="none">
              <path d="M1469.500 224V997M1783.500 224V997M1321 331.500H1918M1321 645.500H1918M1321 959.500H1918" stroke="#000" />
              <path d={OUTLINE} stroke="#079607" strokeWidth="1.9" strokeLinejoin="round" />
            </svg>
          </Viewport>
          <RhinoStatus>te tolerance: 0.001</RhinoStatus>
        </Rhino>
      </Desktop>
      <Taskbar />
    </Screen>
  );
}
